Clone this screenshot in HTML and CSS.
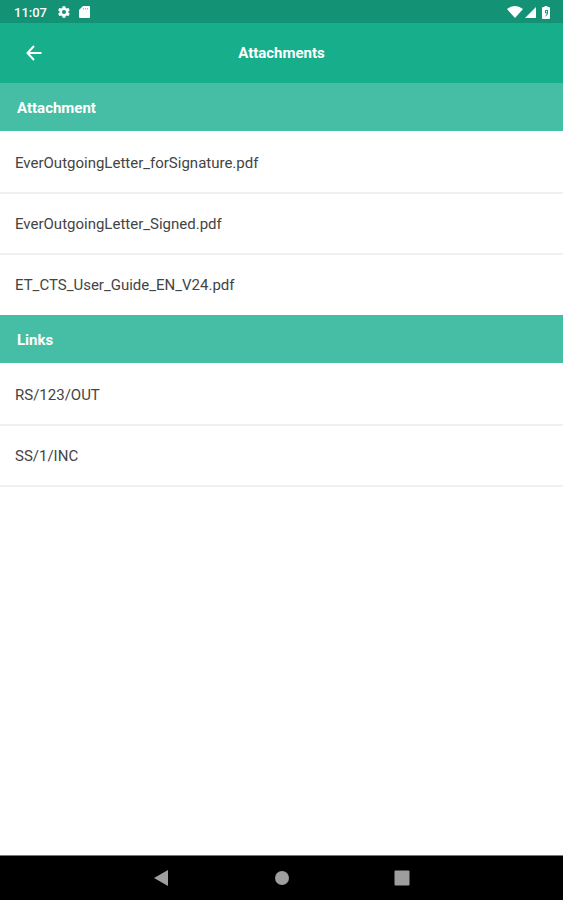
FILE: index.html
```
<!DOCTYPE html>
<html lang="en">
<head>
    <meta charset="UTF-8">
    <meta name="viewport" content="width=device-width, initial-scale=1.0">
    <title>Attachments</title>
    <link rel="stylesheet" href="styles.css">
</head>
<body>
    <div class="status-bar">
        <div class="status-left">
            <span class="time">11:07</span>
            <svg class="gear" width="14" height="14" viewBox="0 0 24 24" fill="currentColor"><path fill-rule="evenodd" d="M19.4 13c.1-.3.1-.7.1-1s0-.7-.1-1l2.1-1.700c.2-.1.300-.4.100-.6l-2-3.500c-.1-.2-.4-.3-.6-.2l-2.500 1c-.5-.4-1.100-.7-1.700-1l-.4-2.600c0-.2-.2-.4-.5-.4h-4c-.3 0-.5.200-.5.400L9 5c-.6.300-1.200.600-1.700 1l-2.500-1c-.2-.1-.5 0-.6.200l-2 3.500c-.1.200-.1.500.1.600L4.500 11a8 8 0 0 0 0 2l-2.200 1.700c-.2.100-.2.400-.1.600l2 3.500c.1.200.4.300.6.200l2.500-1c.5.400 1.100.7 1.700 1l.4 2.600c0 .2.200.400.5.400h4c.3 0 .5-.2.500-.4l.4-2.600c.6-.3 1.200-.6 1.700-1l2.500 1c.2.100.5 0 .6-.2l2-3.500c.1-.2.1-.5-.1-.6zM12 15.500a3.500 3.500 0 1 1 0-7 3.500 3.500 0 0 1 0 7z"/></svg>
            <svg width="11" height="12" viewBox="0 0 11 12"><path fill="currentColor" d="M4 0h6q1 0 1 1v10q0 1-1 1H1q-1 0-1-1V4z"/><path stroke="#149276" stroke-width="1" stroke-opacity=".5" d="M4.500 2v1.500M6.500 2v1.500M8.500 2v1.500"/></svg>
        </div>
        <div class="status-right">
            <svg width="16" height="12" viewBox="0 0 16 12" fill="currentColor"><path d="M0 3Q8-3 16 3L8 12z"/></svg>
            <svg width="11" height="12" viewBox="0 0 11 12" fill="currentColor"><path d="M11 1v11H0z"/></svg>
            <svg class="battery" width="8" height="13" viewBox="0 0 8 13"><path fill="currentColor" d="M2.500 0h3v1H7q1 0 1 1V12q0 1-1 1H1q-1 0-1-1V2q0-1 1-1h1.500z"/><path fill="none" stroke="#149276" d="M5.500 4v3q0 2-2 3M5.500 7h-2V4.500h2"/></svg>
        </div>
    </div>

    <header class="app-bar">
        <button type="button" class="back" aria-label="Back">
            <svg width="16" height="16" viewBox="0 0 16 16" fill="none" stroke="currentColor" stroke-width="2"><path d="M15.500 8H2M8 1 1.500 8 8 15"/></svg>
        </button>
        <h1>Attachments</h1>
    </header>

    <main>
        <section>
            <h2>Attachment</h2>
            <ul class="list files">
                <li><a href="#">EverOutgoingLetter_forSignature.pdf</a></li>
                <li><a href="#">EverOutgoingLetter_Signed.pdf</a></li>
                <li><a href="#">ET_CTS_User_Guide_EN_V24.pdf</a></li>
            </ul>
        </section>
        <section>
            <h2>Links</h2>
            <ul class="list">
                <li><a href="#">RS/123/OUT</a></li>
                <li><a href="#">SS/1/INC</a></li>
            </ul>
        </section>
    </main>

    <nav class="nav-bar">
        <button type="button" aria-label="Back">
            <svg width="16" height="16" viewBox="0 0 16 16" fill="currentColor"><path d="M14 0v16L0 8z"/></svg>
        </button>
        <button type="button" aria-label="Home">
            <svg width="16" height="16" viewBox="0 0 16 16" fill="currentColor"><circle cx="8" cy="8" r="7"/></svg>
        </button>
        <button type="button" aria-label="Recent apps">
            <svg width="16" height="16" viewBox="0 0 16 16" fill="currentColor"><rect width="15" height="15" x=".5" y=".5" rx="1"/></svg>
        </button>
    </nav>
</body>
</html>
```
FILE: styles.css
```
* {
    box-sizing: border-box;
}
body {
    font-family: Roboto, sans-serif;
    margin: 0;
    min-height: 100vh;
    display: flex;
    flex-direction: column;
    background-color: #fff;
    color: #444;
}
svg {
    display: block;
}
button {
    padding: 0;
    border: none;
    background: none;
    cursor: pointer;
}

/* status bar */
.status-bar {
    display: flex;
    justify-content: space-between;
    height: 23px;
    padding: 1px 13px 0 14px;
    background-color: #149276;
    color: #fff;
}
.status-left, .status-right {
    display: flex;
    align-items: center;
}
.time {
    font-size: 13px;
    font-weight: 500;
}
.gear {
    margin: 0 8px 0 10px;
}
.status-right {
    gap: 2px;
}
.battery {
    margin-left: 4px;
}

/* title bar */
.app-bar {
    display: grid;
    grid-template-columns: 48px 1fr 48px;
    align-items: center;
    height: 60px;
    padding: 0 10px;
    background-color: #17ae8c;
    color: #fff;
}
.back {
    display: flex;
    align-items: center;
    justify-content: center;
    height: 48px;
    color: #fff;
}
h1 {
    margin: 0;
    font-size: 15px;
    font-weight: 700;
    line-height: 20px;
    text-align: center;
}

main {
    flex: 1;
}
h2 {
    margin: 0;
    padding: 15px 17px 13px;
    font-size: 15px;
    font-weight: 700;
    line-height: 20px;
    background-color: #45bea5;
    color: #fff;
}
.list {
    margin: 0;
    padding: 2px 0 0;
    list-style: none;
}
.list a {
    display: block;
    padding: 20px 15px 19px;
    border-bottom: 2px solid #f0f0f0;
    font-size: 15px;
    line-height: 20px;
    color: inherit;
    text-decoration: none;
}
.files li:last-child a {
    border-bottom: 1px solid #fff;
}

/* system buttons */
.nav-bar {
    display: flex;
    justify-content: center;
    height: 45px;
    border-top: 1px solid #777;
    background-color: #000;
}
.nav-bar button {
    display: flex;
    align-items: center;
    justify-content: center;
    width: 120px;
    color: #9e9e9e;
}
```
